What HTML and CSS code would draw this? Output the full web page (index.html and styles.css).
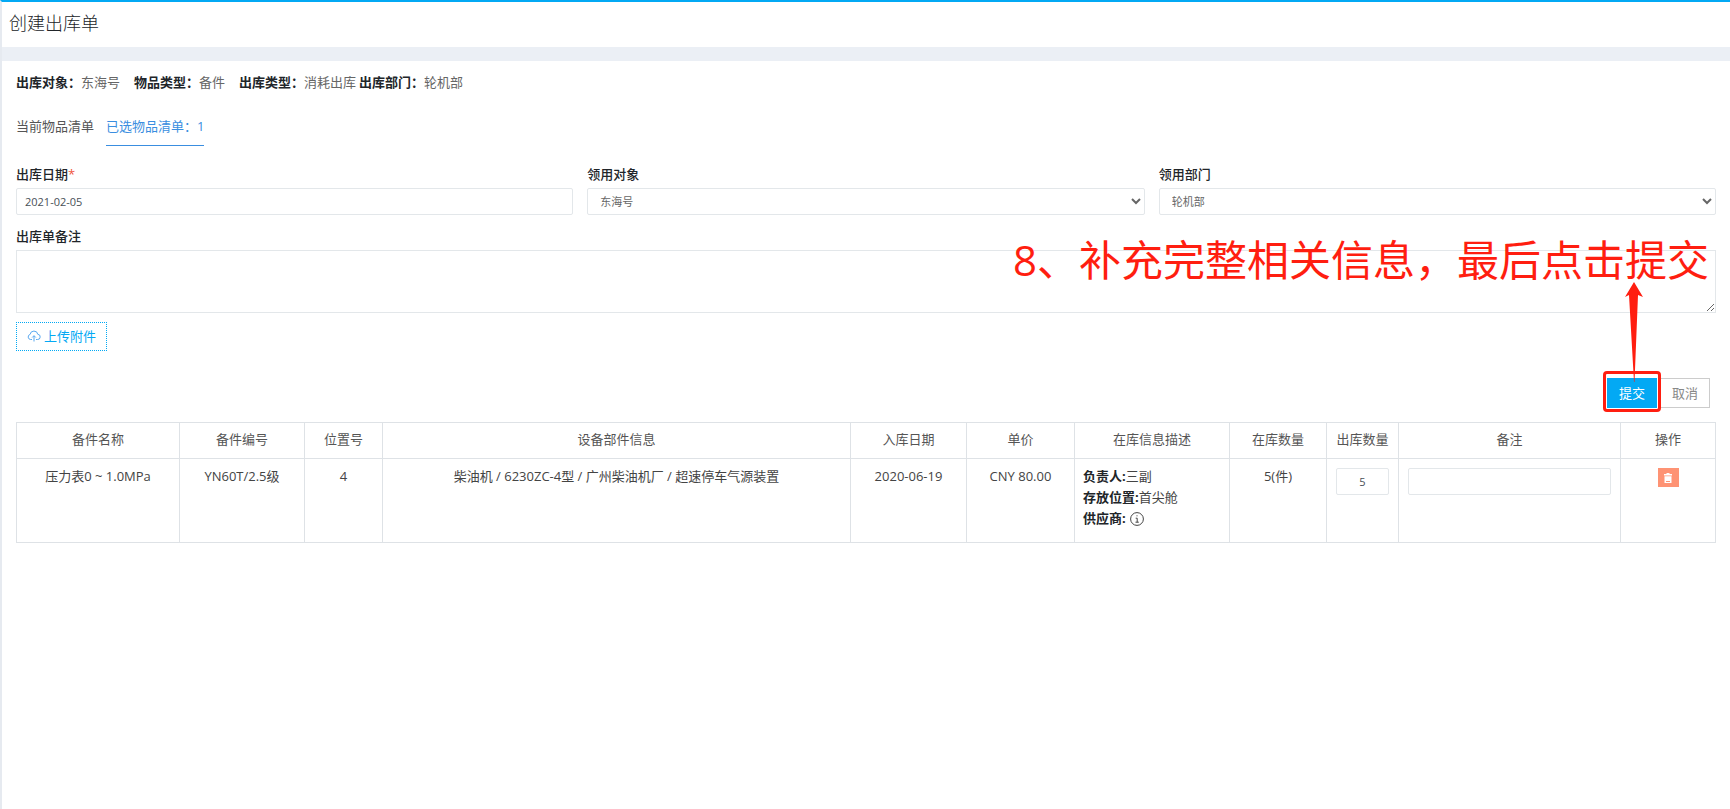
FILE: index.html
```html
<!DOCTYPE html>
<html lang="zh-CN">
<head>
<meta charset="utf-8">
<title>创建出库单</title>
<link rel="stylesheet" href="styles.css">
</head>
<body>
<header class="page-head"><h1 class="page-title">创建出库单</h1></header>
<main class="panel">
  <dl class="summary">
    <div class="summary-item"><dt>出库对象：</dt><dd>东海号</dd></div>
    <div class="summary-item"><dt>物品类型：</dt><dd>备件</dd></div>
    <div class="summary-item summary-item-tight"><dt>出库类型：</dt><dd>消耗出库</dd></div>
    <div class="summary-item"><dt>出库部门：</dt><dd>轮机部</dd></div>
  </dl>
  <nav class="tabs">
    <a class="tab" href="#current">当前物品清单</a>
    <a class="tab tab-active" href="#selected">已选物品清单：1</a>
  </nav>
  <form class="form">
    <div class="form-row">
      <div class="field">
        <label class="label" for="date">出库日期<span class="required">*</span></label>
        <input class="control" id="date" type="text" value="2021-02-05">
      </div>
      <div class="field">
        <label class="label" for="target">领用对象</label>
        <select class="control control-select" id="target"><option>东海号</option></select>
      </div>
      <div class="field">
        <label class="label" for="dept">领用部门</label>
        <select class="control control-select" id="dept"><option>轮机部</option></select>
      </div>
    </div>
    <div class="field field-note">
      <label class="label" for="note">出库单备注</label>
      <textarea class="control control-area" id="note"></textarea>
      <p class="callout">8、补充完整相关信息，最后点击提交</p>
    </div>
    <button class="upload" type="button">
      <svg class="upload-icon" viewBox="0 0 14 14" aria-hidden="true"><path d="M5 10.500H3.600A2.600 2.600 0 0 1 3.100 5.400 3.900 3.900 0 0 1 10.800 5.300 2.600 2.600 0 0 1 10.400 10.500H9M7 12.500V6.800M5.200 8.500 7 6.700 8.800 8.500"/></svg>
      <span>上传附件</span>
    </button>
    <div class="actions">
      <div class="submit-wrap">
        <button class="btn btn-primary" type="button">提交</button>
        <span class="marker"></span>
        <svg class="arrow" viewBox="0 0 18 100" aria-hidden="true"><path d="M9 0 18 15 13 13 9.500 100 9 100 4 13 0 15Z"/></svg>
      </div>
      <button class="btn btn-plain" type="button">取消</button>
    </div>
  </form>
  <table class="grid">
    <colgroup>
      <col class="c-name"><col class="c-code"><col class="c-pos"><col><col class="c-date"><col class="c-price"><col class="c-desc"><col class="c-stock"><col class="c-out"><col class="c-remark"><col class="c-ops">
    </colgroup>
    <thead>
      <tr><th>备件名称</th><th>备件编号</th><th>位置号</th><th>设备部件信息</th><th>入库日期</th><th>单价</th><th>在库信息描述</th><th>在库数量</th><th>出库数量</th><th>备注</th><th>操作</th></tr>
    </thead>
    <tbody>
      <tr>
        <td>压力表0 ~ 1.0MPa</td>
        <td>YN60T/2.5级</td>
        <td>4</td>
        <td>柴油机 / 6230ZC-4型 / 广州柴油机厂 / 超速停车气源装置</td>
        <td>2020-06-19</td>
        <td>CNY 80.00</td>
        <td class="desc">
          <div><b>负责人:</b>三副</div>
          <div><b>存放位置:</b>首尖舱</div>
          <div class="supplier"><b>供应商:</b>
            <svg class="info" viewBox="0 0 14 14" aria-hidden="true"><circle cx="7" cy="7" r="6.400"/><path d="M5.700 6.200H7.200V10.200M5.500 10.200H8.800M6.500 3.800H7.500"/></svg></div>
        </td>
        <td>5(件)</td>
        <td><input class="control control-cell" type="text" value="5" aria-label="出库数量"></td>
        <td><input class="control control-cell" type="text" aria-label="备注"></td>
        <td><button class="delete" type="button" aria-label="删除"><svg class="delete-icon" viewBox="0 0 8 10" aria-hidden="true"><path d="M2.500 0H5.500V1H8V2.500H0V1H2.500ZM.5 3.200H7.500V10H.5Z"/><path class="delete-line" d="M2 8.500H6"/></svg></button></td>
      </tr>
    </tbody>
  </table>
</main>
</body>
</html>
```
FILE: styles.css
```css
* { box-sizing: border-box; }
body {
  margin: 0;
  min-height: 100vh;
  border-top: 2px solid #03a9f4;
  border-left: 2px solid #e6eaf0;
  background: #fff;
  color: #212529;
  font: 400 13px/21px "Open Sans", "Noto Sans CJK SC", sans-serif;
}
button, input, select, textarea { font-family: inherit; font-weight: inherit; }
.page-head {
  padding: 8px 7px 11px;
  border-bottom: 14px solid #ebeff5;
}
.page-title { margin: 0; font-size: 18px; line-height: 26px; font-weight: 300; }
.panel { padding: 11px 14px; }
.summary { display: flex; margin: 0; }
.summary-item { display: flex; padding-right: 14px; }
.summary-item-tight { padding-right: 3px; }
.summary dt { font-weight: 700; }
.summary dd { margin: 0; color: #666; }
.tabs { display: flex; gap: 12px; margin-top: 23px; }
.tab { padding-bottom: 8px; color: #555; text-decoration: none; }
.tab-active { color: #3a8ee0; border-bottom: 1px solid #3a8ee0; }
.form { margin-top: 18px; }
.form-row { display: grid; grid-template-columns: repeat(3, 1fr); gap: 14px; }
.field { display: flex; flex-direction: column; }
.field-note { position: relative; margin-top: 11px; }
.label { margin-bottom: 3px; font-weight: 500; }
.required { color: #f0553c; }
.control {
  width: 100%;
  height: 27px;
  padding: 0 8px;
  border: 1px solid #e3e7ea;
  border-radius: 2px;
  background: #fff;
  color: #495057;
  font-size: 11px;
}
.control-select { color: #666; }
.control-area { height: 63px; border-radius: 0; resize: vertical; }
.control-cell { display: block; text-align: center; }
.callout {
  position: absolute;
  right: 7px;
  top: 3px;
  margin: 0;
  color: #ff1e10;
  font-size: 42px;
  line-height: 62px;
  white-space: nowrap;
}
.upload {
  display: flex;
  align-items: center;
  gap: 3px;
  height: 29px;
  margin-top: 9px;
  padding: 0 10px 2px;
  border: 1px dotted #03a9f4;
  background: #fff;
  color: #03a9f4;
  font-size: 13px;
}
.upload-icon { width: 14px; height: 14px; fill: none; stroke: #5aa9f0; }
.actions { display: flex; justify-content: flex-end; gap: 3px; margin: 27px 6px 14px 0; }
.submit-wrap { position: relative; }
.btn { display: block; height: 30px; padding: 0 11px 2px; border: 1px solid #ccc; font-size: 13px; }
.btn-primary { border-color: #03a9f4; background: #03a9f4; color: #fff; }
.btn-plain { background: #fff; color: #888; }
.marker { position: absolute; inset: -7px -4px -4px; border: 3px solid #ff1e10; border-radius: 4px; pointer-events: none; }
.arrow { position: absolute; left: 18px; bottom: 26px; width: 18px; height: 100px; fill: #ff1e10; pointer-events: none; }
.grid { width: 100%; table-layout: fixed; border-collapse: collapse; text-align: center; }
.grid th, .grid td { border: 1px solid #dee2e6; padding: 7px 9px; vertical-align: top; }
.grid th { padding: 6px 4px 8px; font-weight: 400; color: #555; }
.grid td { height: 84px; color: #444; }
.grid .desc { padding: 7px 8px; text-align: left; }
.grid input { margin-top: 2px; }
.c-name { width: 163px; }
.c-code { width: 125px; }
.c-pos { width: 78px; }
.c-date { width: 116px; }
.c-price { width: 108px; }
.c-desc { width: 155px; }
.c-stock { width: 97px; }
.c-out { width: 72px; }
.c-remark { width: 222px; }
.c-ops { width: 95px; }
.desc b { font-weight: 700; color: #212529; }
.supplier { display: flex; align-items: center; gap: 4px; }
.info { width: 14px; height: 14px; fill: none; stroke: #444; }
.delete {
  display: inline-flex;
  align-items: center;
  justify-content: center;
  width: 21px;
  height: 19px;
  margin-top: 2px;
  padding: 0;
  border: 0;
  background: #fe9374;
}
.delete-icon { width: 8px; height: 10px; fill: #fff; }
.delete-line { fill: none; stroke: #fe9374; }
```
